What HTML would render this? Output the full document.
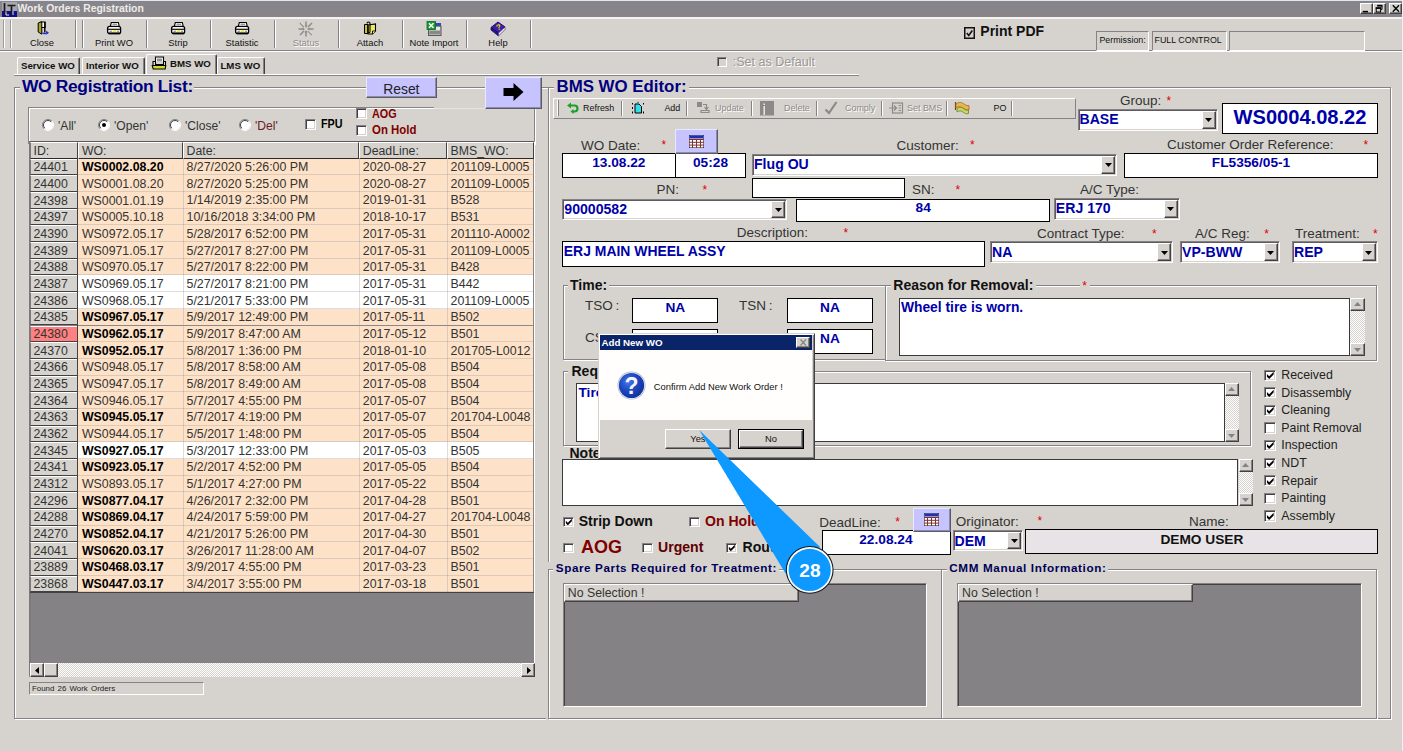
<!DOCTYPE html>
<html lang="en"><head><meta charset="utf-8"><title>Work Orders Registration</title>
<style>
html,body{margin:0;padding:0}
body{width:1403px;height:751px;position:relative;overflow:hidden;background:#d6d3ce;font-family:"Liberation Sans",Arial,sans-serif;}
body div{position:absolute;box-sizing:border-box}
.t{white-space:nowrap}
.gf{border:1px solid #848284;box-shadow:1px 1px 0 #fff, inset 1px 1px 0 #fff}
.sunk{border:1px solid;border-color:#848284 #fff #fff #848284;box-shadow:inset 1px 1px 0 #5e5c5e, inset -1px -1px 0 #d6d3ce}
.flat{border:1px solid #000}
.rais{border:1px solid;border-color:#fff #424142 #424142 #fff;box-shadow:inset -1px -1px 0 #848284}
.cb{border:1px solid;border-color:#848284 #fff #fff #848284;box-shadow:inset 1px 1px 0 #424142, inset -1px -1px 0 #d6d3ce}
.lav{background:#c6c3ff}
.hatch{background-image:repeating-conic-gradient(#fff 0 25%,#d6d3ce 0 50%);background-size:2px 2px}
</style></head><body>

<div class="" style="left:0.00px;top:0.00px;width:1403.00px;height:16.70px;background:#87858a;"></div>
<div class="" style="left:0.00px;top:0.00px;width:1403.00px;height:1.10px;background:#dfe7f2;"></div>
<svg style="position:absolute;left:2px;top:2px" width="15" height="15" viewBox="0 0 15 15"><rect x="0" y="0" width="15" height="10" fill="#a8a6a8"/><rect x="0" y="9" width="15" height="6" fill="#10108a"/><path d="M2.500 1v11h4M5.500 3.500h8M9.500 3.500v10" stroke="#181828" stroke-width="1.700" fill="none"/><path d="M4 9.500v3.500h3M11 9v4" stroke="#e8e8f0" stroke-width="1" fill="none"/></svg>
<div class="t " style="left:17.50px;top:4.20px;font-size:10.4px;line-height:10.4px;color:#eeecea;font-weight:bold;">Work Orders Registration</div>
<div class="rais" style="left:1359.80px;top:2.80px;width:12.80px;height:11.30px;background:#d6d3ce;"><svg width="11" height="10" viewBox="0 0 11 10" style="position:absolute;left:0;top:0"><path d="M1.700 7.600h5.300" stroke="#000" stroke-width="1.500"/></svg></div>
<div class="rais" style="left:1373.30px;top:2.80px;width:12.80px;height:11.30px;background:#d6d3ce;"><svg width="11" height="10" viewBox="0 0 11 10" style="position:absolute;left:0;top:0"><path d="M3.600 1.800h4.400v3.600h-1.200" stroke="#000" stroke-width="1" fill="none"/><path d="M3.100 1.600h5.400" stroke="#000" stroke-width="1.600"/><rect x="2.200" y="4.200" width="4.400" height="3.800" stroke="#000" stroke-width="1" fill="none"/><path d="M1.700 4h5.400" stroke="#000" stroke-width="1.600"/></svg></div>
<div class="rais" style="left:1388.80px;top:2.80px;width:12.80px;height:11.30px;background:#d6d3ce;"><svg width="11" height="10" viewBox="0 0 11 10" style="position:absolute;left:0;top:0"><path d="M2.800 1.200l6.200 6.600M9 1.200l-6.200 6.600" stroke="#000" stroke-width="1.300"/></svg></div>
<div class="" style="left:0.00px;top:16.70px;width:1403.00px;height:2.00px;background:#f4f3f1;"></div>
<div class="" style="left:0.00px;top:50.00px;width:1403.00px;height:1.00px;background:#848284;"></div>
<div class="" style="left:0.00px;top:51.00px;width:1403.00px;height:1.00px;background:#fff;"></div>
<div class="" style="left:3.00px;top:20.00px;width:1.00px;height:28.00px;background:#9c9a98;"></div>
<div class="" style="left:4.00px;top:20.00px;width:1.00px;height:28.00px;background:#fff;"></div>
<div class="" style="left:10.00px;top:20.00px;width:1.00px;height:28.00px;background:#9c9a98;"></div>
<div class="" style="left:11.00px;top:20.00px;width:1.00px;height:28.00px;background:#fff;"></div>
<div class="" style="left:75.00px;top:20.00px;width:1.00px;height:28.00px;background:#848284;"></div>
<div class="" style="left:76.00px;top:20.00px;width:1.00px;height:28.00px;background:#fff;"></div>
<div class="" style="left:81.80px;top:20.00px;width:1.00px;height:28.00px;background:#848284;"></div>
<div class="" style="left:82.80px;top:20.00px;width:1.00px;height:28.00px;background:#fff;"></div>
<div class="" style="left:146.30px;top:20.00px;width:1.00px;height:28.00px;background:#848284;"></div>
<div class="" style="left:147.30px;top:20.00px;width:1.00px;height:28.00px;background:#fff;"></div>
<div class="" style="left:210.30px;top:20.00px;width:1.00px;height:28.00px;background:#848284;"></div>
<div class="" style="left:211.30px;top:20.00px;width:1.00px;height:28.00px;background:#fff;"></div>
<div class="" style="left:274.30px;top:20.00px;width:1.00px;height:28.00px;background:#848284;"></div>
<div class="" style="left:275.30px;top:20.00px;width:1.00px;height:28.00px;background:#fff;"></div>
<div class="" style="left:338.00px;top:20.00px;width:1.00px;height:28.00px;background:#848284;"></div>
<div class="" style="left:339.00px;top:20.00px;width:1.00px;height:28.00px;background:#fff;"></div>
<div class="" style="left:402.00px;top:20.00px;width:1.00px;height:28.00px;background:#848284;"></div>
<div class="" style="left:403.00px;top:20.00px;width:1.00px;height:28.00px;background:#fff;"></div>
<div class="" style="left:466.20px;top:20.00px;width:1.00px;height:28.00px;background:#848284;"></div>
<div class="" style="left:467.20px;top:20.00px;width:1.00px;height:28.00px;background:#fff;"></div>
<div class="" style="left:530.20px;top:20.00px;width:1.00px;height:28.00px;background:#848284;"></div>
<div class="" style="left:531.20px;top:20.00px;width:1.00px;height:28.00px;background:#fff;"></div>
<div class="t " style="left:2.00px;top:37.64px;font-size:9.4px;line-height:9.4px;color:#111;width:80.00px;text-align:center;">Close</div>
<svg style="position:absolute;left:34px;top:21px" width="16" height="16" viewBox="0 0 16 16"><rect x="7" y="1" width="4.200" height="5.500" fill="#fff" stroke="#000" stroke-width="1"/><path d="M4.200 2l3.600-1.300v12.500l-3.600-2.200z" fill="#a8a418" stroke="#000" stroke-width="1"/><path d="M10.800 1v10.500" stroke="#000" stroke-width="1.400"/><path d="M8.500 11.800c2 1.200 3.500 1 5.500 0" stroke="#2838c8" stroke-width="1.500" fill="none"/><path d="M12 9.800l3 1.800-2.800 2z" fill="#2838c8"/></svg>
<div class="t " style="left:74.00px;top:37.64px;font-size:9.4px;line-height:9.4px;color:#111;width:80.00px;text-align:center;">Print WO</div>
<svg style="position:absolute;left:106px;top:21px" width="16" height="16" viewBox="0 0 16 16"><path d="M4.300 5.500l1-4h7l1 4z" fill="#fff" stroke="#000" stroke-width="1.100"/><path d="M6.500 3.200h4.500" stroke="#444" stroke-width=".8"/><rect x="1.600" y="5.300" width="13" height="7.400" rx="2" fill="#f4f4f4" stroke="#000" stroke-width="1.300"/><path d="M2 8.300h12.200" stroke="#000" stroke-width="1.100"/><path d="M2.500 12.300h11.200" stroke="#000" stroke-width="1.800"/><rect x="6.800" y="9.300" width="3.400" height="1.500" fill="#e8e818"/><path d="M3.500 10.300h2.500M11 10.300h2" stroke="#888" stroke-width="1"/></svg>
<div class="t " style="left:138.00px;top:37.64px;font-size:9.4px;line-height:9.4px;color:#111;width:80.00px;text-align:center;">Strip</div>
<svg style="position:absolute;left:170px;top:21px" width="16" height="16" viewBox="0 0 16 16"><path d="M4.300 5.500l1-4h7l1 4z" fill="#fff" stroke="#000" stroke-width="1.100"/><path d="M6.500 3.200h4.500" stroke="#444" stroke-width=".8"/><rect x="1.600" y="5.300" width="13" height="7.400" rx="2" fill="#f4f4f4" stroke="#000" stroke-width="1.300"/><path d="M2 8.300h12.200" stroke="#000" stroke-width="1.100"/><path d="M2.500 12.300h11.200" stroke="#000" stroke-width="1.800"/><rect x="6.800" y="9.300" width="3.400" height="1.500" fill="#e8e818"/><path d="M3.500 10.300h2.500M11 10.300h2" stroke="#888" stroke-width="1"/></svg>
<div class="t " style="left:202.00px;top:37.64px;font-size:9.4px;line-height:9.4px;color:#111;width:80.00px;text-align:center;">Statistic</div>
<svg style="position:absolute;left:234px;top:21px" width="16" height="16" viewBox="0 0 16 16"><path d="M4.300 5.500l1-4h7l1 4z" fill="#fff" stroke="#000" stroke-width="1.100"/><path d="M6.500 3.200h4.500" stroke="#444" stroke-width=".8"/><rect x="1.600" y="5.300" width="13" height="7.400" rx="2" fill="#f4f4f4" stroke="#000" stroke-width="1.300"/><path d="M2 8.300h12.200" stroke="#000" stroke-width="1.100"/><path d="M2.500 12.300h11.200" stroke="#000" stroke-width="1.800"/><rect x="6.800" y="9.300" width="3.400" height="1.500" fill="#e8e818"/><path d="M3.500 10.300h2.500M11 10.300h2" stroke="#888" stroke-width="1"/></svg>
<div class="t " style="left:266.00px;top:37.64px;font-size:9.4px;line-height:9.4px;color:#8e8c8a;width:80.00px;text-align:center;text-shadow:1px 1px 0 #fff;">Status</div>
<svg style="position:absolute;left:298px;top:21px" width="16" height="16" viewBox="0 0 16 16"><g stroke="#8e8c8a" stroke-width="1.500" fill="none"><path d="M8 .5v5M8 15.500v-5M.5 8h5M15.500 8h-5M2 2l4 4M14 2l-4 4M2 14l4-4M14 14l-4-4"/></g><g fill="#8e8c8a"><path d="M6.500 4.500h3L8 7zM6.500 11.500h3L8 9zM4.500 6.500v3L7 8zM11.500 6.500v3L9 8z"/></g><g stroke="#fff" stroke-width=".7" opacity=".8"><path d="M3 1.800l4 4M9.800 9l4.500 4.500"/></g></svg>
<div class="t " style="left:330.00px;top:37.64px;font-size:9.4px;line-height:9.4px;color:#111;width:80.00px;text-align:center;">Attach</div>
<svg style="position:absolute;left:362px;top:21px" width="16" height="16" viewBox="0 0 16 16"><path d="M2.500 3.500h3.500v9h-3.500z" fill="#c8c040" stroke="#000" stroke-width="1"/><path d="M6 4l7.500-1v7l-3 3h-4.500z" fill="#f0ec60" stroke="#000" stroke-width="1.100"/><path d="M10.500 13v-3h3" fill="#fff8b0" stroke="#000" stroke-width=".9"/><path d="M5 2.500c0-2 3-2 3 0v8c0 1.500-2 1.500-2 0v-6" fill="none" stroke="#000" stroke-width="1.100"/></svg>
<div class="t " style="left:394.00px;top:37.64px;font-size:9.4px;line-height:9.4px;color:#111;width:80.00px;text-align:center;">Note Import</div>
<svg style="position:absolute;left:426px;top:21px" width="16" height="16" viewBox="0 0 16 16"><rect x="9" y="2" width="6" height="3" fill="#2848c8"/><rect x="2.500" y="5" width="12.500" height="9.500" fill="#b4b4b4" stroke="#585858" stroke-width="1"/><rect x="3.500" y="10" width="10.500" height="3" fill="#888"/><rect x="10" y="6" width="4" height="3" fill="#e8e8e8"/><rect x="1" y=".5" width="8.500" height="8" fill="#1f9a38" stroke="#0a6a20" stroke-width=".8"/><path d="M3 2.300l4.500 4.500M7.500 2.300l-4.500 4.500" stroke="#fff" stroke-width="1.500"/></svg>
<div class="t " style="left:458.00px;top:37.64px;font-size:9.4px;line-height:9.4px;color:#111;width:80.00px;text-align:center;">Help</div>
<svg style="position:absolute;left:490px;top:21px" width="16" height="16" viewBox="0 0 16 16"><path d="M1 6.500l7-5.500 7 5-6.500 6z" fill="#3a1fa8" stroke="#1c0a60" stroke-width="1"/><path d="M1 6.500v2.500l7.500 6v-3z" fill="#2a1488" stroke="#1c0a60" stroke-width=".8"/><path d="M8.500 12l6.500-6v2.500l-6.500 6.500z" fill="#f0f0f8" stroke="#504088" stroke-width=".8"/><text x="6" y="9" font-size="8" font-weight="bold" fill="#f4d818" font-family="Liberation Sans, sans-serif" transform="rotate(-20 8 6)">?</text></svg>
<svg style="position:absolute;left:964px;top:26.500px" width="11" height="12" viewBox="0 0 11 12"><rect x=".75" y=".75" width="9.500" height="10.500" fill="none" stroke="#111" stroke-width="1.500"/><path d="M2.800 6l2 2.500 3.500-5" fill="none" stroke="#111" stroke-width="1.600"/></svg>
<div class="t " style="left:980.30px;top:24.45px;font-size:14px;line-height:14px;color:#111;font-weight:bold;">Print PDF</div>
<div class="" style="left:1096.00px;top:31.00px;width:53.00px;height:19.50px;border:1px solid;border-color:#848284 #fff #fff #848284;"></div>
<div class="" style="left:1152.00px;top:31.00px;width:74.50px;height:19.50px;border:1px solid;border-color:#848284 #fff #fff #848284;"></div>
<div class="" style="left:1229.40px;top:31.00px;width:135.50px;height:19.50px;border:1px solid;border-color:#848284 #fff #fff #848284;"></div>
<div class="t " style="left:1099.40px;top:35.97px;font-size:8.9px;line-height:8.9px;color:#111;">Permission:</div>
<div class="t " style="left:1154.50px;top:35.97px;font-size:8.9px;line-height:8.9px;color:#111;">FULL CONTROL</div>
<div class="" style="left:14.00px;top:74.00px;width:845.00px;height:1.00px;background:#fff;"></div>
<div class="" style="left:14.00px;top:75.00px;width:845.00px;height:1.00px;background:#848284;"></div>
<div class="" style="left:16.60px;top:57.00px;width:63.40px;height:17.00px;background:#d6d3ce;border:1px solid;border-color:#fff #424142 #d6d3ce #fff;border-bottom:none;border-radius:2px 2px 0 0;box-shadow:inset -1px 0 0 #848284;"></div>
<div class="" style="left:81.60px;top:57.00px;width:63.00px;height:17.00px;background:#d6d3ce;border:1px solid;border-color:#fff #424142 #d6d3ce #fff;border-bottom:none;border-radius:2px 2px 0 0;box-shadow:inset -1px 0 0 #848284;"></div>
<div class="" style="left:217.00px;top:57.00px;width:48.00px;height:17.00px;background:#d6d3ce;border:1px solid;border-color:#fff #424142 #d6d3ce #fff;border-bottom:none;border-radius:2px 2px 0 0;box-shadow:inset -1px 0 0 #848284;"></div>
<div class="" style="left:145.60px;top:54.00px;width:71.40px;height:20.00px;background:#d6d3ce;border:1px solid;border-color:#fff #424142 #d6d3ce #fff;border-bottom:none;border-radius:2px 2px 0 0;box-shadow:inset -1px 0 0 #848284;"></div>
<div class="t " style="left:21.00px;top:60.79px;font-size:9.7px;line-height:9.7px;color:#111;font-weight:bold;">Service WO</div>
<div class="t " style="left:86.00px;top:60.79px;font-size:9.7px;line-height:9.7px;color:#111;font-weight:bold;">Interior WO</div>
<div class="t " style="left:170.00px;top:58.79px;font-size:9.7px;line-height:9.7px;color:#111;font-weight:bold;">BMS WO</div>
<div class="t " style="left:220.40px;top:60.79px;font-size:9.7px;line-height:9.7px;color:#111;font-weight:bold;">LMS WO</div>
<svg style="position:absolute;left:150.500px;top:56px" width="16" height="14" viewBox="0 0 16 14"><path d="M4.500 6v-5h8v5" fill="#fff" stroke="#000" stroke-width="1.100"/><rect x="6" y="2.500" width="5" height="3" fill="#909498"/><path d="M2 5.500h2.500v3h8v-3h2v4h-12.500z" fill="#e8e8e8" stroke="#000" stroke-width="1.100"/><path d="M1.200 9.500h13.500l-.5 3.500h-12z" fill="#d8d820" stroke="#000" stroke-width="1.100"/></svg>
<div class="" style="left:716.50px;top:57.00px;width:10.00px;height:10.00px;background:#d6d3ce;border:1px solid;border-color:#848284 #fff #fff #848284;box-shadow:inset 1px 1px 0 #424142;"></div>
<div class="t " style="left:732.70px;top:55.88px;font-size:12.55px;line-height:12.55px;color:#9a9896;text-shadow:1px 1px 0 #fff;">:Set as Default</div>
<div class="gf" style="left:14.00px;top:87.00px;width:535.00px;height:632.00px;"></div>
<div class="" style="left:20.00px;top:78.00px;width:174.00px;height:18.00px;background:#d6d3ce;"></div>
<div class="t " style="left:22.00px;top:78.27px;font-size:17.4px;line-height:17.4px;color:#000080;font-weight:bold;letter-spacing:-0.33px;">WO Registration List:</div>
<div class="gf" style="left:28.00px;top:107.00px;width:507.00px;height:37.00px;"></div>
<div class="" style="left:354.00px;top:100.00px;width:80.00px;height:44.00px;background:#d6d3ce;"></div>
<div class="" style="left:354.00px;top:107.00px;width:80.00px;height:1.00px;background:#848284;"></div>
<div class="" style="left:354.00px;top:108.00px;width:80.00px;height:1.00px;background:#fff;"></div>
<div class="" style="left:434.00px;top:106.00px;width:52.00px;height:4.00px;background:#d6d3ce;"></div>
<div class="" style="left:434.00px;top:108.00px;width:52.00px;height:1.00px;background:#e6e4e0;"></div>
<div class="" style="left:365.60px;top:77.00px;width:71.50px;height:20.60px;background:#c6c3ff;border:1px solid;border-color:#e8e8ff #5a5a6a #5a5a6a #e8e8ff;box-shadow:inset -1px -1px 0 #8c8ca8;"></div>
<div class="t " style="left:365.60px;top:82.63px;font-size:13.9px;line-height:13.9px;color:#222;width:71.50px;text-align:center;">Reset</div>
<div class="" style="left:485.00px;top:77.00px;width:57.40px;height:31.50px;background:#c6c3ff;border:1px solid;border-color:#e8e8ff #5a5a6a #5a5a6a #e8e8ff;box-shadow:inset -1px -1px 0 #8c8ca8;"></div>
<svg style="position:absolute;left:502px;top:82px" width="24" height="20" viewBox="0 0 24 20"><path d="M1.500 6h10V1l10 9-10 9v-5h-10z" fill="#000"/></svg>
<svg style="position:absolute;left:42px;top:119px" width="12" height="12" viewBox="0 0 12 12"><circle cx="6" cy="6" r="5" fill="#fff"/><path d="M2.100 9.900A5.500 5.500 0 0 1 9.900 2.100" fill="none" stroke="#848284" stroke-width="1"/><path d="M2.800 9.200A4.500 4.500 0 0 1 9.200 2.800" fill="none" stroke="#424142" stroke-width="1"/><path d="M9.900 2.100A5.500 5.500 0 0 1 2.100 9.900" fill="none" stroke="#fff" stroke-width="1"/></svg>
<svg style="position:absolute;left:98px;top:119px" width="12" height="12" viewBox="0 0 12 12"><circle cx="6" cy="6" r="5" fill="#fff"/><path d="M2.100 9.900A5.500 5.500 0 0 1 9.900 2.100" fill="none" stroke="#848284" stroke-width="1"/><path d="M2.800 9.200A4.500 4.500 0 0 1 9.200 2.800" fill="none" stroke="#424142" stroke-width="1"/><path d="M9.900 2.100A5.500 5.500 0 0 1 2.100 9.900" fill="none" stroke="#fff" stroke-width="1"/><circle cx="6" cy="6" r="2" fill="#000"/></svg>
<svg style="position:absolute;left:169px;top:119px" width="12" height="12" viewBox="0 0 12 12"><circle cx="6" cy="6" r="5" fill="#fff"/><path d="M2.100 9.900A5.500 5.500 0 0 1 9.900 2.100" fill="none" stroke="#848284" stroke-width="1"/><path d="M2.800 9.200A4.500 4.500 0 0 1 9.200 2.800" fill="none" stroke="#424142" stroke-width="1"/><path d="M9.900 2.100A5.500 5.500 0 0 1 2.100 9.900" fill="none" stroke="#fff" stroke-width="1"/></svg>
<svg style="position:absolute;left:239px;top:119px" width="12" height="12" viewBox="0 0 12 12"><circle cx="6" cy="6" r="5" fill="#fff"/><path d="M2.100 9.900A5.500 5.500 0 0 1 9.900 2.100" fill="none" stroke="#848284" stroke-width="1"/><path d="M2.800 9.200A4.500 4.500 0 0 1 9.200 2.800" fill="none" stroke="#424142" stroke-width="1"/><path d="M9.900 2.100A5.500 5.500 0 0 1 2.100 9.900" fill="none" stroke="#fff" stroke-width="1"/></svg>
<div class="t " style="left:58.00px;top:119.76px;font-size:12.1px;line-height:12.1px;color:#333;">'All'</div>
<div class="t " style="left:114.00px;top:119.76px;font-size:12.1px;line-height:12.1px;color:#333;">'Open'</div>
<div class="t " style="left:185.00px;top:119.76px;font-size:12.1px;line-height:12.1px;color:#333;">'Close'</div>
<div class="t " style="left:255.00px;top:119.76px;font-size:12.1px;line-height:12.1px;color:#6a2020;">'Del'</div>
<div class="cb" style="left:305.00px;top:119.00px;width:10.5px;height:10.5px;background:#fff;"></div>
<div class="t " style="left:321.00px;top:118.42px;font-size:12.5px;line-height:12.5px;color:#000;font-weight:bold;transform:scaleX(.86);transform-origin:0 0;">FPU</div>
<div class="cb" style="left:356.40px;top:108.00px;width:10.5px;height:10.5px;background:#fff;"></div>
<div class="t " style="left:372.00px;top:107.59px;font-size:12.3px;line-height:12.3px;color:#800000;font-weight:bold;transform:scaleX(.88);transform-origin:0 0;">AOG</div>
<div class="cb" style="left:356.40px;top:125.00px;width:10.5px;height:10.5px;background:#fff;"></div>
<div class="t " style="left:372.00px;top:124.09px;font-size:12.3px;line-height:12.3px;color:#800000;font-weight:bold;transform:scaleX(.93);transform-origin:0 0;">On Hold</div>
<div class="" style="left:29.30px;top:141.30px;width:506.20px;height:536.20px;background:#848284;border:1px solid #5a585a;border-left:2px solid #7b797b;border-right-color:#fff;border-bottom-color:#fff"></div>
<div class="" style="left:30.00px;top:142.30px;width:48.40px;height:16.40px;background:#d6d3ce;border:1px solid;border-color:#fff #424142 #2a2a2a #7b797b;"></div>
<div class="t " style="left:33.50px;top:144.79px;font-size:12.3px;line-height:12.3px;color:#333;">ID:</div>
<div class="" style="left:78.40px;top:142.30px;width:104.60px;height:16.40px;background:#d6d3ce;border:1px solid;border-color:#fff #424142 #2a2a2a #fff;"></div>
<div class="t " style="left:81.90px;top:144.79px;font-size:12.3px;line-height:12.3px;color:#333;">WO:</div>
<div class="" style="left:183.00px;top:142.30px;width:176.30px;height:16.40px;background:#d6d3ce;border:1px solid;border-color:#fff #424142 #2a2a2a #fff;"></div>
<div class="t " style="left:186.50px;top:144.79px;font-size:12.3px;line-height:12.3px;color:#333;">Date:</div>
<div class="" style="left:359.30px;top:142.30px;width:87.70px;height:16.40px;background:#d6d3ce;border:1px solid;border-color:#fff #424142 #2a2a2a #fff;"></div>
<div class="t " style="left:362.80px;top:144.79px;font-size:12.3px;line-height:12.3px;color:#333;">DeadLine:</div>
<div class="" style="left:447.00px;top:142.30px;width:86.50px;height:16.40px;background:#d6d3ce;border:1px solid;border-color:#fff #424142 #2a2a2a #fff;"></div>
<div class="t " style="left:450.50px;top:144.79px;font-size:12.3px;line-height:12.3px;color:#333;">BMS_WO:</div>
<div class="" style="left:78.40px;top:158.70px;width:455.10px;height:16.68px;background:#fde2c8;"></div>
<div class="" style="left:30.00px;top:158.70px;width:48.40px;height:16.68px;background:#d6d3ce;border:1px solid;border-color:#fff #2a2a2a #424142 #7b797b;"></div>
<div class="" style="left:78.40px;top:174.38px;width:455.10px;height:1.00px;background:rgba(150,150,160,.32);"></div>
<div class="t " style="left:33.50px;top:161.15px;font-size:12.35px;line-height:12.35px;color:#333;">24401</div>
<div class="t " style="left:81.90px;top:161.15px;font-size:12.35px;line-height:12.35px;color:#000;font-weight:bold;">WS0002.08.20</div>
<div class="t " style="left:186.50px;top:161.10px;font-size:12.4px;line-height:12.4px;color:#333;">8/27/2020 5:26:00 PM</div>
<div class="t " style="left:362.80px;top:161.10px;font-size:12.4px;line-height:12.4px;color:#333;">2020-08-27</div>
<div class="t " style="left:450.50px;top:161.10px;font-size:12.4px;line-height:12.4px;color:#333;">201109-L0005</div>
<div class="" style="left:78.40px;top:175.38px;width:455.10px;height:16.68px;background:#fde2c8;"></div>
<div class="" style="left:30.00px;top:175.38px;width:48.40px;height:16.68px;background:#d6d3ce;border:1px solid;border-color:#fff #2a2a2a #424142 #7b797b;"></div>
<div class="" style="left:78.40px;top:191.06px;width:455.10px;height:1.00px;background:rgba(150,150,160,.32);"></div>
<div class="t " style="left:33.50px;top:177.83px;font-size:12.35px;line-height:12.35px;color:#333;">24400</div>
<div class="t " style="left:81.90px;top:177.83px;font-size:12.35px;line-height:12.35px;color:#333;">WS0001.08.20</div>
<div class="t " style="left:186.50px;top:177.78px;font-size:12.4px;line-height:12.4px;color:#333;">8/27/2020 5:25:00 PM</div>
<div class="t " style="left:362.80px;top:177.78px;font-size:12.4px;line-height:12.4px;color:#333;">2020-08-27</div>
<div class="t " style="left:450.50px;top:177.78px;font-size:12.4px;line-height:12.4px;color:#333;">201109-L0005</div>
<div class="" style="left:78.40px;top:192.06px;width:455.10px;height:16.68px;background:#fde2c8;"></div>
<div class="" style="left:30.00px;top:192.06px;width:48.40px;height:16.68px;background:#d6d3ce;border:1px solid;border-color:#fff #2a2a2a #424142 #7b797b;"></div>
<div class="" style="left:78.40px;top:207.74px;width:455.10px;height:1.00px;background:rgba(150,150,160,.32);"></div>
<div class="t " style="left:33.50px;top:194.51px;font-size:12.35px;line-height:12.35px;color:#333;">24398</div>
<div class="t " style="left:81.90px;top:194.51px;font-size:12.35px;line-height:12.35px;color:#333;">WS0001.01.19</div>
<div class="t " style="left:186.50px;top:194.46px;font-size:12.4px;line-height:12.4px;color:#333;">1/14/2019 2:35:00 PM</div>
<div class="t " style="left:362.80px;top:194.46px;font-size:12.4px;line-height:12.4px;color:#333;">2019-01-31</div>
<div class="t " style="left:450.50px;top:194.46px;font-size:12.4px;line-height:12.4px;color:#333;">B528</div>
<div class="" style="left:78.40px;top:208.74px;width:455.10px;height:16.68px;background:#fde2c8;"></div>
<div class="" style="left:30.00px;top:208.74px;width:48.40px;height:16.68px;background:#d6d3ce;border:1px solid;border-color:#fff #2a2a2a #424142 #7b797b;"></div>
<div class="" style="left:78.40px;top:224.42px;width:455.10px;height:1.00px;background:rgba(150,150,160,.32);"></div>
<div class="t " style="left:33.50px;top:211.19px;font-size:12.35px;line-height:12.35px;color:#333;">24397</div>
<div class="t " style="left:81.90px;top:211.19px;font-size:12.35px;line-height:12.35px;color:#333;">WS0005.10.18</div>
<div class="t " style="left:186.50px;top:211.14px;font-size:12.4px;line-height:12.4px;color:#333;">10/16/2018 3:34:00 PM</div>
<div class="t " style="left:362.80px;top:211.14px;font-size:12.4px;line-height:12.4px;color:#333;">2018-10-17</div>
<div class="t " style="left:450.50px;top:211.14px;font-size:12.4px;line-height:12.4px;color:#333;">B531</div>
<div class="" style="left:78.40px;top:225.42px;width:455.10px;height:16.68px;background:#fde2c8;"></div>
<div class="" style="left:30.00px;top:225.42px;width:48.40px;height:16.68px;background:#d6d3ce;border:1px solid;border-color:#fff #2a2a2a #424142 #7b797b;"></div>
<div class="" style="left:78.40px;top:241.10px;width:455.10px;height:1.00px;background:rgba(150,150,160,.32);"></div>
<div class="t " style="left:33.50px;top:227.87px;font-size:12.35px;line-height:12.35px;color:#333;">24390</div>
<div class="t " style="left:81.90px;top:227.87px;font-size:12.35px;line-height:12.35px;color:#333;">WS0972.05.17</div>
<div class="t " style="left:186.50px;top:227.82px;font-size:12.4px;line-height:12.4px;color:#333;">5/28/2017 6:52:00 PM</div>
<div class="t " style="left:362.80px;top:227.82px;font-size:12.4px;line-height:12.4px;color:#333;">2017-05-31</div>
<div class="t " style="left:450.50px;top:227.82px;font-size:12.4px;line-height:12.4px;color:#333;">201110-A0002</div>
<div class="" style="left:78.40px;top:242.10px;width:455.10px;height:16.68px;background:#fde2c8;"></div>
<div class="" style="left:30.00px;top:242.10px;width:48.40px;height:16.68px;background:#d6d3ce;border:1px solid;border-color:#fff #2a2a2a #424142 #7b797b;"></div>
<div class="" style="left:78.40px;top:257.78px;width:455.10px;height:1.00px;background:rgba(150,150,160,.32);"></div>
<div class="t " style="left:33.50px;top:244.55px;font-size:12.35px;line-height:12.35px;color:#333;">24389</div>
<div class="t " style="left:81.90px;top:244.55px;font-size:12.35px;line-height:12.35px;color:#333;">WS0971.05.17</div>
<div class="t " style="left:186.50px;top:244.50px;font-size:12.4px;line-height:12.4px;color:#333;">5/27/2017 8:27:00 PM</div>
<div class="t " style="left:362.80px;top:244.50px;font-size:12.4px;line-height:12.4px;color:#333;">2017-05-31</div>
<div class="t " style="left:450.50px;top:244.50px;font-size:12.4px;line-height:12.4px;color:#333;">201109-L0005</div>
<div class="" style="left:78.40px;top:258.78px;width:455.10px;height:16.68px;background:#fde2c8;"></div>
<div class="" style="left:30.00px;top:258.78px;width:48.40px;height:16.68px;background:#d6d3ce;border:1px solid;border-color:#fff #2a2a2a #424142 #7b797b;"></div>
<div class="" style="left:78.40px;top:274.46px;width:455.10px;height:1.00px;background:rgba(150,150,160,.32);"></div>
<div class="t " style="left:33.50px;top:261.23px;font-size:12.35px;line-height:12.35px;color:#333;">24388</div>
<div class="t " style="left:81.90px;top:261.23px;font-size:12.35px;line-height:12.35px;color:#333;">WS0970.05.17</div>
<div class="t " style="left:186.50px;top:261.18px;font-size:12.4px;line-height:12.4px;color:#333;">5/27/2017 8:22:00 PM</div>
<div class="t " style="left:362.80px;top:261.18px;font-size:12.4px;line-height:12.4px;color:#333;">2017-05-31</div>
<div class="t " style="left:450.50px;top:261.18px;font-size:12.4px;line-height:12.4px;color:#333;">B428</div>
<div class="" style="left:78.40px;top:275.46px;width:455.10px;height:16.68px;background:#ffffff;"></div>
<div class="" style="left:30.00px;top:275.46px;width:48.40px;height:16.68px;background:#d6d3ce;border:1px solid;border-color:#fff #2a2a2a #424142 #7b797b;"></div>
<div class="" style="left:78.40px;top:291.14px;width:455.10px;height:1.00px;background:rgba(150,150,160,.32);"></div>
<div class="t " style="left:33.50px;top:277.91px;font-size:12.35px;line-height:12.35px;color:#333;">24387</div>
<div class="t " style="left:81.90px;top:277.91px;font-size:12.35px;line-height:12.35px;color:#333;">WS0969.05.17</div>
<div class="t " style="left:186.50px;top:277.86px;font-size:12.4px;line-height:12.4px;color:#333;">5/27/2017 8:21:00 PM</div>
<div class="t " style="left:362.80px;top:277.86px;font-size:12.4px;line-height:12.4px;color:#333;">2017-05-31</div>
<div class="t " style="left:450.50px;top:277.86px;font-size:12.4px;line-height:12.4px;color:#333;">B442</div>
<div class="" style="left:78.40px;top:292.14px;width:455.10px;height:16.68px;background:#ffffff;"></div>
<div class="" style="left:30.00px;top:292.14px;width:48.40px;height:16.68px;background:#d6d3ce;border:1px solid;border-color:#fff #2a2a2a #424142 #7b797b;"></div>
<div class="" style="left:78.40px;top:307.82px;width:455.10px;height:1.00px;background:rgba(150,150,160,.32);"></div>
<div class="t " style="left:33.50px;top:294.59px;font-size:12.35px;line-height:12.35px;color:#333;">24386</div>
<div class="t " style="left:81.90px;top:294.59px;font-size:12.35px;line-height:12.35px;color:#333;">WS0968.05.17</div>
<div class="t " style="left:186.50px;top:294.54px;font-size:12.4px;line-height:12.4px;color:#333;">5/21/2017 5:33:00 PM</div>
<div class="t " style="left:362.80px;top:294.54px;font-size:12.4px;line-height:12.4px;color:#333;">2017-05-31</div>
<div class="t " style="left:450.50px;top:294.54px;font-size:12.4px;line-height:12.4px;color:#333;">201109-L0005</div>
<div class="" style="left:78.40px;top:308.82px;width:455.10px;height:16.68px;background:#fde2c8;"></div>
<div class="" style="left:30.00px;top:308.82px;width:48.40px;height:16.68px;background:#d6d3ce;border:1px solid;border-color:#fff #2a2a2a #424142 #7b797b;"></div>
<div class="" style="left:78.40px;top:324.50px;width:455.10px;height:1.00px;background:rgba(150,150,160,.32);"></div>
<div class="t " style="left:33.50px;top:311.27px;font-size:12.35px;line-height:12.35px;color:#333;">24385</div>
<div class="t " style="left:81.90px;top:311.27px;font-size:12.35px;line-height:12.35px;color:#000;font-weight:bold;">WS0967.05.17</div>
<div class="t " style="left:186.50px;top:311.22px;font-size:12.4px;line-height:12.4px;color:#333;">5/9/2017 12:49:00 PM</div>
<div class="t " style="left:362.80px;top:311.22px;font-size:12.4px;line-height:12.4px;color:#333;">2017-05-11</div>
<div class="t " style="left:450.50px;top:311.22px;font-size:12.4px;line-height:12.4px;color:#333;">B502</div>
<div class="" style="left:78.40px;top:325.50px;width:455.10px;height:16.68px;background:#fde2c8;"></div>
<div class="" style="left:30.00px;top:325.50px;width:48.40px;height:16.68px;background:#ff8080;border:1px solid;border-color:#fff #2a2a2a #424142 #7b797b;"></div>
<div class="" style="left:78.40px;top:341.18px;width:455.10px;height:1.00px;background:rgba(150,150,160,.32);"></div>
<div class="t " style="left:33.50px;top:327.95px;font-size:12.35px;line-height:12.35px;color:#333;">24380</div>
<div class="t " style="left:81.90px;top:327.95px;font-size:12.35px;line-height:12.35px;color:#000;font-weight:bold;">WS0962.05.17</div>
<div class="t " style="left:186.50px;top:327.90px;font-size:12.4px;line-height:12.4px;color:#333;">5/9/2017 8:47:00 AM</div>
<div class="t " style="left:362.80px;top:327.90px;font-size:12.4px;line-height:12.4px;color:#333;">2017-05-12</div>
<div class="t " style="left:450.50px;top:327.90px;font-size:12.4px;line-height:12.4px;color:#333;">B501</div>
<div class="" style="left:78.40px;top:342.18px;width:455.10px;height:16.68px;background:#fde2c8;"></div>
<div class="" style="left:30.00px;top:342.18px;width:48.40px;height:16.68px;background:#d6d3ce;border:1px solid;border-color:#fff #2a2a2a #424142 #7b797b;"></div>
<div class="" style="left:78.40px;top:357.86px;width:455.10px;height:1.00px;background:rgba(150,150,160,.32);"></div>
<div class="t " style="left:33.50px;top:344.63px;font-size:12.35px;line-height:12.35px;color:#333;">24370</div>
<div class="t " style="left:81.90px;top:344.63px;font-size:12.35px;line-height:12.35px;color:#000;font-weight:bold;">WS0952.05.17</div>
<div class="t " style="left:186.50px;top:344.58px;font-size:12.4px;line-height:12.4px;color:#333;">5/8/2017 1:36:00 PM</div>
<div class="t " style="left:362.80px;top:344.58px;font-size:12.4px;line-height:12.4px;color:#333;">2018-01-10</div>
<div class="t " style="left:450.50px;top:344.58px;font-size:12.4px;line-height:12.4px;color:#333;">201705-L0012</div>
<div class="" style="left:78.40px;top:358.86px;width:455.10px;height:16.68px;background:#fde2c8;"></div>
<div class="" style="left:30.00px;top:358.86px;width:48.40px;height:16.68px;background:#d6d3ce;border:1px solid;border-color:#fff #2a2a2a #424142 #7b797b;"></div>
<div class="" style="left:78.40px;top:374.54px;width:455.10px;height:1.00px;background:rgba(150,150,160,.32);"></div>
<div class="t " style="left:33.50px;top:361.31px;font-size:12.35px;line-height:12.35px;color:#333;">24366</div>
<div class="t " style="left:81.90px;top:361.31px;font-size:12.35px;line-height:12.35px;color:#333;">WS0948.05.17</div>
<div class="t " style="left:186.50px;top:361.26px;font-size:12.4px;line-height:12.4px;color:#333;">5/8/2017 8:58:00 AM</div>
<div class="t " style="left:362.80px;top:361.26px;font-size:12.4px;line-height:12.4px;color:#333;">2017-05-08</div>
<div class="t " style="left:450.50px;top:361.26px;font-size:12.4px;line-height:12.4px;color:#333;">B504</div>
<div class="" style="left:78.40px;top:375.54px;width:455.10px;height:16.68px;background:#fde2c8;"></div>
<div class="" style="left:30.00px;top:375.54px;width:48.40px;height:16.68px;background:#d6d3ce;border:1px solid;border-color:#fff #2a2a2a #424142 #7b797b;"></div>
<div class="" style="left:78.40px;top:391.22px;width:455.10px;height:1.00px;background:rgba(150,150,160,.32);"></div>
<div class="t " style="left:33.50px;top:377.99px;font-size:12.35px;line-height:12.35px;color:#333;">24365</div>
<div class="t " style="left:81.90px;top:377.99px;font-size:12.35px;line-height:12.35px;color:#333;">WS0947.05.17</div>
<div class="t " style="left:186.50px;top:377.94px;font-size:12.4px;line-height:12.4px;color:#333;">5/8/2017 8:49:00 AM</div>
<div class="t " style="left:362.80px;top:377.94px;font-size:12.4px;line-height:12.4px;color:#333;">2017-05-08</div>
<div class="t " style="left:450.50px;top:377.94px;font-size:12.4px;line-height:12.4px;color:#333;">B504</div>
<div class="" style="left:78.40px;top:392.22px;width:455.10px;height:16.68px;background:#fde2c8;"></div>
<div class="" style="left:30.00px;top:392.22px;width:48.40px;height:16.68px;background:#d6d3ce;border:1px solid;border-color:#fff #2a2a2a #424142 #7b797b;"></div>
<div class="" style="left:78.40px;top:407.90px;width:455.10px;height:1.00px;background:rgba(150,150,160,.32);"></div>
<div class="t " style="left:33.50px;top:394.67px;font-size:12.35px;line-height:12.35px;color:#333;">24364</div>
<div class="t " style="left:81.90px;top:394.67px;font-size:12.35px;line-height:12.35px;color:#333;">WS0946.05.17</div>
<div class="t " style="left:186.50px;top:394.62px;font-size:12.4px;line-height:12.4px;color:#333;">5/7/2017 4:55:00 PM</div>
<div class="t " style="left:362.80px;top:394.62px;font-size:12.4px;line-height:12.4px;color:#333;">2017-05-07</div>
<div class="t " style="left:450.50px;top:394.62px;font-size:12.4px;line-height:12.4px;color:#333;">B504</div>
<div class="" style="left:78.40px;top:408.90px;width:455.10px;height:16.68px;background:#fde2c8;"></div>
<div class="" style="left:30.00px;top:408.90px;width:48.40px;height:16.68px;background:#d6d3ce;border:1px solid;border-color:#fff #2a2a2a #424142 #7b797b;"></div>
<div class="" style="left:78.40px;top:424.58px;width:455.10px;height:1.00px;background:rgba(150,150,160,.32);"></div>
<div class="t " style="left:33.50px;top:411.35px;font-size:12.35px;line-height:12.35px;color:#333;">24363</div>
<div class="t " style="left:81.90px;top:411.35px;font-size:12.35px;line-height:12.35px;color:#000;font-weight:bold;">WS0945.05.17</div>
<div class="t " style="left:186.50px;top:411.30px;font-size:12.4px;line-height:12.4px;color:#333;">5/7/2017 4:19:00 PM</div>
<div class="t " style="left:362.80px;top:411.30px;font-size:12.4px;line-height:12.4px;color:#333;">2017-05-07</div>
<div class="t " style="left:450.50px;top:411.30px;font-size:12.4px;line-height:12.4px;color:#333;">201704-L0048</div>
<div class="" style="left:78.40px;top:425.58px;width:455.10px;height:16.68px;background:#fde2c8;"></div>
<div class="" style="left:30.00px;top:425.58px;width:48.40px;height:16.68px;background:#d6d3ce;border:1px solid;border-color:#fff #2a2a2a #424142 #7b797b;"></div>
<div class="" style="left:78.40px;top:441.26px;width:455.10px;height:1.00px;background:rgba(150,150,160,.32);"></div>
<div class="t " style="left:33.50px;top:428.03px;font-size:12.35px;line-height:12.35px;color:#333;">24362</div>
<div class="t " style="left:81.90px;top:428.03px;font-size:12.35px;line-height:12.35px;color:#333;">WS0944.05.17</div>
<div class="t " style="left:186.50px;top:427.98px;font-size:12.4px;line-height:12.4px;color:#333;">5/5/2017 1:48:00 PM</div>
<div class="t " style="left:362.80px;top:427.98px;font-size:12.4px;line-height:12.4px;color:#333;">2017-05-05</div>
<div class="t " style="left:450.50px;top:427.98px;font-size:12.4px;line-height:12.4px;color:#333;">B504</div>
<div class="" style="left:78.40px;top:442.26px;width:455.10px;height:16.68px;background:#ffffff;"></div>
<div class="" style="left:30.00px;top:442.26px;width:48.40px;height:16.68px;background:#d6d3ce;border:1px solid;border-color:#fff #2a2a2a #424142 #7b797b;"></div>
<div class="" style="left:78.40px;top:457.94px;width:455.10px;height:1.00px;background:rgba(150,150,160,.32);"></div>
<div class="t " style="left:33.50px;top:444.71px;font-size:12.35px;line-height:12.35px;color:#333;">24345</div>
<div class="t " style="left:81.90px;top:444.71px;font-size:12.35px;line-height:12.35px;color:#000;font-weight:bold;">WS0927.05.17</div>
<div class="t " style="left:186.50px;top:444.66px;font-size:12.4px;line-height:12.4px;color:#333;">5/3/2017 12:33:00 PM</div>
<div class="t " style="left:362.80px;top:444.66px;font-size:12.4px;line-height:12.4px;color:#333;">2017-05-03</div>
<div class="t " style="left:450.50px;top:444.66px;font-size:12.4px;line-height:12.4px;color:#333;">B505</div>
<div class="" style="left:78.40px;top:458.94px;width:455.10px;height:16.68px;background:#fde2c8;"></div>
<div class="" style="left:30.00px;top:458.94px;width:48.40px;height:16.68px;background:#d6d3ce;border:1px solid;border-color:#fff #2a2a2a #424142 #7b797b;"></div>
<div class="" style="left:78.40px;top:474.62px;width:455.10px;height:1.00px;background:rgba(150,150,160,.32);"></div>
<div class="t " style="left:33.50px;top:461.39px;font-size:12.35px;line-height:12.35px;color:#333;">24341</div>
<div class="t " style="left:81.90px;top:461.39px;font-size:12.35px;line-height:12.35px;color:#000;font-weight:bold;">WS0923.05.17</div>
<div class="t " style="left:186.50px;top:461.34px;font-size:12.4px;line-height:12.4px;color:#333;">5/2/2017 4:52:00 PM</div>
<div class="t " style="left:362.80px;top:461.34px;font-size:12.4px;line-height:12.4px;color:#333;">2017-05-05</div>
<div class="t " style="left:450.50px;top:461.34px;font-size:12.4px;line-height:12.4px;color:#333;">B504</div>
<div class="" style="left:78.40px;top:475.62px;width:455.10px;height:16.68px;background:#fde2c8;"></div>
<div class="" style="left:30.00px;top:475.62px;width:48.40px;height:16.68px;background:#d6d3ce;border:1px solid;border-color:#fff #2a2a2a #424142 #7b797b;"></div>
<div class="" style="left:78.40px;top:491.30px;width:455.10px;height:1.00px;background:rgba(150,150,160,.32);"></div>
<div class="t " style="left:33.50px;top:478.07px;font-size:12.35px;line-height:12.35px;color:#333;">24312</div>
<div class="t " style="left:81.90px;top:478.07px;font-size:12.35px;line-height:12.35px;color:#333;">WS0893.05.17</div>
<div class="t " style="left:186.50px;top:478.02px;font-size:12.4px;line-height:12.4px;color:#333;">5/1/2017 4:27:00 PM</div>
<div class="t " style="left:362.80px;top:478.02px;font-size:12.4px;line-height:12.4px;color:#333;">2017-05-22</div>
<div class="t " style="left:450.50px;top:478.02px;font-size:12.4px;line-height:12.4px;color:#333;">B504</div>
<div class="" style="left:78.40px;top:492.30px;width:455.10px;height:16.68px;background:#fde2c8;"></div>
<div class="" style="left:30.00px;top:492.30px;width:48.40px;height:16.68px;background:#d6d3ce;border:1px solid;border-color:#fff #2a2a2a #424142 #7b797b;"></div>
<div class="" style="left:78.40px;top:507.98px;width:455.10px;height:1.00px;background:rgba(150,150,160,.32);"></div>
<div class="t " style="left:33.50px;top:494.75px;font-size:12.35px;line-height:12.35px;color:#333;">24296</div>
<div class="t " style="left:81.90px;top:494.75px;font-size:12.35px;line-height:12.35px;color:#000;font-weight:bold;">WS0877.04.17</div>
<div class="t " style="left:186.50px;top:494.70px;font-size:12.4px;line-height:12.4px;color:#333;">4/26/2017 2:32:00 PM</div>
<div class="t " style="left:362.80px;top:494.70px;font-size:12.4px;line-height:12.4px;color:#333;">2017-04-28</div>
<div class="t " style="left:450.50px;top:494.70px;font-size:12.4px;line-height:12.4px;color:#333;">B501</div>
<div class="" style="left:78.40px;top:508.98px;width:455.10px;height:16.68px;background:#fde2c8;"></div>
<div class="" style="left:30.00px;top:508.98px;width:48.40px;height:16.68px;background:#d6d3ce;border:1px solid;border-color:#fff #2a2a2a #424142 #7b797b;"></div>
<div class="" style="left:78.40px;top:524.66px;width:455.10px;height:1.00px;background:rgba(150,150,160,.32);"></div>
<div class="t " style="left:33.50px;top:511.43px;font-size:12.35px;line-height:12.35px;color:#333;">24288</div>
<div class="t " style="left:81.90px;top:511.43px;font-size:12.35px;line-height:12.35px;color:#000;font-weight:bold;">WS0869.04.17</div>
<div class="t " style="left:186.50px;top:511.38px;font-size:12.4px;line-height:12.4px;color:#333;">4/24/2017 5:59:00 PM</div>
<div class="t " style="left:362.80px;top:511.38px;font-size:12.4px;line-height:12.4px;color:#333;">2017-04-27</div>
<div class="t " style="left:450.50px;top:511.38px;font-size:12.4px;line-height:12.4px;color:#333;">201704-L0048</div>
<div class="" style="left:78.40px;top:525.66px;width:455.10px;height:16.68px;background:#fde2c8;"></div>
<div class="" style="left:30.00px;top:525.66px;width:48.40px;height:16.68px;background:#d6d3ce;border:1px solid;border-color:#fff #2a2a2a #424142 #7b797b;"></div>
<div class="" style="left:78.40px;top:541.34px;width:455.10px;height:1.00px;background:rgba(150,150,160,.32);"></div>
<div class="t " style="left:33.50px;top:528.11px;font-size:12.35px;line-height:12.35px;color:#333;">24270</div>
<div class="t " style="left:81.90px;top:528.11px;font-size:12.35px;line-height:12.35px;color:#000;font-weight:bold;">WS0852.04.17</div>
<div class="t " style="left:186.50px;top:528.06px;font-size:12.4px;line-height:12.4px;color:#333;">4/21/2017 5:26:00 PM</div>
<div class="t " style="left:362.80px;top:528.06px;font-size:12.4px;line-height:12.4px;color:#333;">2017-04-30</div>
<div class="t " style="left:450.50px;top:528.06px;font-size:12.4px;line-height:12.4px;color:#333;">B501</div>
<div class="" style="left:78.40px;top:542.34px;width:455.10px;height:16.68px;background:#fde2c8;"></div>
<div class="" style="left:30.00px;top:542.34px;width:48.40px;height:16.68px;background:#d6d3ce;border:1px solid;border-color:#fff #2a2a2a #424142 #7b797b;"></div>
<div class="" style="left:78.40px;top:558.02px;width:455.10px;height:1.00px;background:rgba(150,150,160,.32);"></div>
<div class="t " style="left:33.50px;top:544.79px;font-size:12.35px;line-height:12.35px;color:#333;">24041</div>
<div class="t " style="left:81.90px;top:544.79px;font-size:12.35px;line-height:12.35px;color:#000;font-weight:bold;">WS0620.03.17</div>
<div class="t " style="left:186.50px;top:544.74px;font-size:12.4px;line-height:12.4px;color:#333;">3/26/2017 11:28:00 AM</div>
<div class="t " style="left:362.80px;top:544.74px;font-size:12.4px;line-height:12.4px;color:#333;">2017-04-07</div>
<div class="t " style="left:450.50px;top:544.74px;font-size:12.4px;line-height:12.4px;color:#333;">B502</div>
<div class="" style="left:78.40px;top:559.02px;width:455.10px;height:16.68px;background:#fde2c8;"></div>
<div class="" style="left:30.00px;top:559.02px;width:48.40px;height:16.68px;background:#d6d3ce;border:1px solid;border-color:#fff #2a2a2a #424142 #7b797b;"></div>
<div class="" style="left:78.40px;top:574.70px;width:455.10px;height:1.00px;background:rgba(150,150,160,.32);"></div>
<div class="t " style="left:33.50px;top:561.47px;font-size:12.35px;line-height:12.35px;color:#333;">23889</div>
<div class="t " style="left:81.90px;top:561.47px;font-size:12.35px;line-height:12.35px;color:#000;font-weight:bold;">WS0468.03.17</div>
<div class="t " style="left:186.50px;top:561.42px;font-size:12.4px;line-height:12.4px;color:#333;">3/9/2017 4:55:00 PM</div>
<div class="t " style="left:362.80px;top:561.42px;font-size:12.4px;line-height:12.4px;color:#333;">2017-03-23</div>
<div class="t " style="left:450.50px;top:561.42px;font-size:12.4px;line-height:12.4px;color:#333;">B501</div>
<div class="" style="left:78.40px;top:575.70px;width:455.10px;height:16.68px;background:#fde2c8;"></div>
<div class="" style="left:30.00px;top:575.70px;width:48.40px;height:16.68px;background:#d6d3ce;border:1px solid;border-color:#fff #2a2a2a #424142 #7b797b;"></div>
<div class="" style="left:78.40px;top:591.38px;width:455.10px;height:1.00px;background:rgba(150,150,160,.32);"></div>
<div class="t " style="left:33.50px;top:578.15px;font-size:12.35px;line-height:12.35px;color:#333;">23868</div>
<div class="t " style="left:81.90px;top:578.15px;font-size:12.35px;line-height:12.35px;color:#000;font-weight:bold;">WS0447.03.17</div>
<div class="t " style="left:186.50px;top:578.10px;font-size:12.4px;line-height:12.4px;color:#333;">3/4/2017 3:55:00 PM</div>
<div class="t " style="left:362.80px;top:578.10px;font-size:12.4px;line-height:12.4px;color:#333;">2017-03-18</div>
<div class="t " style="left:450.50px;top:578.10px;font-size:12.4px;line-height:12.4px;color:#333;">B501</div>
<div class="" style="left:182.50px;top:158.00px;width:1.00px;height:434.38px;background:rgba(150,150,160,.32);"></div>
<div class="" style="left:358.80px;top:158.00px;width:1.00px;height:434.38px;background:rgba(150,150,160,.32);"></div>
<div class="" style="left:446.50px;top:158.00px;width:1.00px;height:434.38px;background:rgba(150,150,160,.32);"></div>
<div class="" style="left:77.40px;top:158.00px;width:1.00px;height:434.38px;background:#424142;"></div>
<div class="" style="left:30.00px;top:591.88px;width:504.00px;height:1.00px;background:#424142;"></div>
<div class="hatch" style="left:30.00px;top:663.00px;width:504.50px;height:14.00px;"></div>
<div class="rais" style="left:30.00px;top:663.00px;width:13.50px;height:14.00px;background:#d6d3ce;"><svg width="4" height="7" viewBox="0 0 4 7" style="position:absolute;left:3.500px;top:2.500px"><path d="M4 0v7L0 3.500z" fill="#000"/></svg></div>
<div class="rais" style="left:44.00px;top:663.00px;width:14.00px;height:14.00px;background:#d6d3ce;"></div>
<div class="rais" style="left:521.00px;top:663.00px;width:13.50px;height:14.00px;background:#d6d3ce;"><svg width="4" height="7" viewBox="0 0 4 7" style="position:absolute;left:4.500px;top:2.500px"><path d="M0 0v7l4-3.500z" fill="#000"/></svg></div>
<div class="" style="left:28.50px;top:681.60px;width:175.50px;height:13.00px;border:1px solid;border-color:#848284 #fff #fff #848284;"></div>
<div class="t " style="left:32.00px;top:684.61px;font-size:7.9px;line-height:7.9px;color:#222;word-spacing:1px;">Found 26 Work Orders</div>
<div class="gf" style="left:548.00px;top:87.00px;width:843.00px;height:632.00px;"></div>
<div class="" style="left:554.00px;top:78.00px;width:134.50px;height:18.00px;background:#d6d3ce;"></div>
<div class="t " style="left:556.50px;top:78.74px;font-size:16.85px;line-height:16.85px;color:#000080;font-weight:bold;">BMS WO Editor:</div>
<div class="" style="left:553.00px;top:97.50px;width:522.50px;height:21.00px;border:1px solid;border-color:#fff #848284 #848284 #fff;"></div>
<div class="" style="left:557.00px;top:100.00px;width:1.00px;height:16.00px;background:#fff;"></div>
<div class="" style="left:558.00px;top:100.00px;width:1.00px;height:16.00px;background:#848284;"></div>
<div class="" style="left:620.60px;top:100.50px;width:1.00px;height:15.50px;background:#848284;"></div>
<div class="" style="left:621.60px;top:100.50px;width:1.00px;height:15.50px;background:#fff;"></div>
<div class="" style="left:686.00px;top:100.50px;width:1.00px;height:15.50px;background:#848284;"></div>
<div class="" style="left:687.00px;top:100.50px;width:1.00px;height:15.50px;background:#fff;"></div>
<div class="" style="left:751.00px;top:100.50px;width:1.00px;height:15.50px;background:#848284;"></div>
<div class="" style="left:752.00px;top:100.50px;width:1.00px;height:15.50px;background:#fff;"></div>
<div class="" style="left:816.00px;top:100.50px;width:1.00px;height:15.50px;background:#848284;"></div>
<div class="" style="left:817.00px;top:100.50px;width:1.00px;height:15.50px;background:#fff;"></div>
<div class="" style="left:880.80px;top:100.50px;width:1.00px;height:15.50px;background:#848284;"></div>
<div class="" style="left:881.80px;top:100.50px;width:1.00px;height:15.50px;background:#fff;"></div>
<div class="" style="left:946.00px;top:100.50px;width:1.00px;height:15.50px;background:#848284;"></div>
<div class="" style="left:947.00px;top:100.50px;width:1.00px;height:15.50px;background:#fff;"></div>
<div class="" style="left:1011.00px;top:100.50px;width:1.00px;height:15.50px;background:#848284;"></div>
<div class="" style="left:1012.00px;top:100.50px;width:1.00px;height:15.50px;background:#fff;"></div>
<div class="t " style="left:583.00px;top:104.12px;font-size:8.95px;line-height:8.95px;color:#111;">Refresh</div>
<div class="t " style="left:664.40px;top:104.12px;font-size:8.95px;line-height:8.95px;color:#111;">Add</div>
<div class="t " style="left:715.00px;top:104.12px;font-size:8.95px;line-height:8.95px;color:#8c8a88;text-shadow:1px 1px 0 #fff;">Update</div>
<div class="t " style="left:784.00px;top:104.12px;font-size:8.95px;line-height:8.95px;color:#8c8a88;text-shadow:1px 1px 0 #fff;">Delete</div>
<div class="t " style="left:845.00px;top:104.12px;font-size:8.95px;line-height:8.95px;color:#8c8a88;text-shadow:1px 1px 0 #fff;">Comply</div>
<div class="t " style="left:907.00px;top:104.12px;font-size:8.95px;line-height:8.95px;color:#8c8a88;text-shadow:1px 1px 0 #fff;">Set BMS</div>
<div class="t " style="left:993.60px;top:104.12px;font-size:8.95px;line-height:8.95px;color:#111;">PO</div>
<svg style="position:absolute;left:566px;top:102px" width="14" height="13" viewBox="0 0 14 13"><path d="M3 3.500h5.500a3 3 0 0 1 0 6h-2.500" fill="none" stroke="#18a028" stroke-width="2.200"/><path d="M1 3.500l4-3v6z" fill="#18a028"/><path d="M7.500 12l-3-2.500 3-2.500z" fill="#18a028"/></svg>
<svg style="position:absolute;left:631px;top:101px" width="14" height="14" viewBox="0 0 14 14"><path d="M4 3h4l2.500 2.500v6.500h-6.500z" fill="#30e0e8" stroke="#000" stroke-width="1"/><path d="M1.500 2v1.500M1.500 6v2M1.500 10.500v2M12.500 2v1.500M12.500 10.500v2M7 .800v1" stroke="#000" stroke-width="1"/></svg>
<svg style="position:absolute;left:696px;top:101px" width="15" height="14" viewBox="0 0 15 14"><rect x="1" y="1" width="5" height="5" fill="#8c8a88"/><path d="M7 3.500h3.500v4.500M8.500 6l2 2.500 2-2.500M5 11.500h8v-2h-8z" fill="none" stroke="#8c8a88" stroke-width="1.200"/></svg>
<svg style="position:absolute;left:760px;top:100.500px" width="15" height="15" viewBox="0 0 15 15"><rect x="0" y="0" width="14" height="14.500" fill="#8c8a88"/><rect x="3.500" y="5" width="1.500" height="9" fill="#e8e8e8"/><rect x="3.500" y="2.500" width="1.500" height="1.500" fill="#e8e8e8"/></svg>
<svg style="position:absolute;left:824px;top:101px" width="15" height="14" viewBox="0 0 15 14"><path d="M1.500 8.500l3.500 3.500 7.500-11" fill="none" stroke="#8c8a88" stroke-width="2.200"/></svg>
<svg style="position:absolute;left:889px;top:102px" width="15" height="12" viewBox="0 0 15 12"><rect x="3.500" y="1" width="10" height="10" fill="none" stroke="#8c8a88" stroke-width="1.200"/><path d="M0 6h7M5 3.500l2.500 2.500-2.500 2.500M9.500 3.500h2.500M9.500 6h2.500M9.500 8.500h2.500" stroke="#8c8a88" stroke-width="1.200" fill="none"/></svg>
<svg style="position:absolute;left:954px;top:100px" width="16" height="16" viewBox="0 0 16 16"><path d="M1.500 2v8" stroke="#804020" stroke-width="1.200"/><path d="M2 4c3-2.500 6-1.500 8 0s4 2 5 1.500v4c-2 1-4 0-6-1.500s-5-2-7 0z" fill="#e8b850" stroke="#a06820" stroke-width=".8"/><path d="M3 8.500c3-2 5-1 7 .5s3.500 1.500 4.500 1v3.500c-2 .8-3.500 0-5.500-1.500s-4-1.500-6 0z" fill="#c8d860" stroke="#708020" stroke-width=".8"/></svg>
<div class="t " style="left:1120.00px;top:93.57px;font-size:13.5px;line-height:13.5px;color:#333;">Group:</div>
<div class="t " style="left:1166.50px;top:95.34px;font-size:12px;line-height:12px;color:#e00000;">*</div>
<div class="sunk" style="left:1077.50px;top:108.80px;width:140.30px;height:22.00px;background:#fff;"></div>
<div class="rais" style="left:1201.80px;top:110.80px;width:14.00px;height:18.00px;background:#d6d3ce;"><svg width="7" height="4" viewBox="0 0 7 4" style="position:absolute;left:50%;top:50%;margin:-1.5px 0 0 -3.5px"><path d="M0 0h7L3.5 4z" fill="#000"/></svg></div>
<div class="t " style="left:1079.50px;top:112.46px;font-size:14.1px;line-height:14.1px;color:#0000a8;font-weight:bold;">BASE</div>
<div class="flat" style="left:1222.00px;top:103.30px;width:156.00px;height:30.70px;background:#fff;"></div>
<div class="t " style="left:1222.00px;top:106.69px;font-size:20.1px;line-height:20.1px;color:#0000a8;font-weight:bold;width:156.00px;text-align:center;">WS0004.08.22</div>
<div class="t " style="left:581.00px;top:138.57px;font-size:13.5px;line-height:13.5px;color:#333;">WO Date:</div>
<div class="t " style="left:661.50px;top:139.34px;font-size:12px;line-height:12px;color:#e00000;">*</div>
<div class="flat" style="left:562.00px;top:153.00px;width:113.60px;height:25.40px;background:#fff;"></div>
<div class="flat" style="left:674.60px;top:153.00px;width:71.80px;height:25.40px;background:#fff;"></div>
<div class="" style="left:674.60px;top:129.00px;width:43.40px;height:25.00px;background:#c6c3ff;border:1px solid;border-color:#e8e8ff #5a5a6a #5a5a6a #e8e8ff;box-shadow:inset -1px -1px 0 #8c8ca8;"></div>
<svg style="position:absolute;left:688.500px;top:134.500px" width="15" height="13" viewBox="0 0 15 13"><rect x="0" y="0" width="15" height="13" fill="#fff" stroke="#000" stroke-width="1"/><rect x=".5" y=".5" width="14" height="3" fill="#2030b0"/><path d="M0 4.500h15M0 7.300h15M0 10.100h15M3.500 4v9M7.500 4v9M11.500 4v9" stroke="#803030" stroke-width="1"/></svg>
<div class="t " style="left:562.00px;top:156.40px;font-size:13.7px;line-height:13.7px;color:#0000a8;font-weight:bold;width:113.60px;text-align:center;">13.08.22</div>
<div class="t " style="left:674.60px;top:156.40px;font-size:13.7px;line-height:13.7px;color:#0000a8;font-weight:bold;width:71.80px;text-align:center;">05:28</div>
<div class="t " style="left:896.60px;top:138.57px;font-size:13.5px;line-height:13.5px;color:#333;">Customer:</div>
<div class="t " style="left:970.00px;top:139.34px;font-size:12px;line-height:12px;color:#e00000;">*</div>
<div class="sunk" style="left:752.00px;top:153.50px;width:365.00px;height:22.20px;background:#fff;"></div>
<div class="rais" style="left:1101.00px;top:155.50px;width:14.00px;height:18.20px;background:#d6d3ce;"><svg width="7" height="4" viewBox="0 0 7 4" style="position:absolute;left:50%;top:50%;margin:-1.5px 0 0 -3.5px"><path d="M0 0h7L3.5 4z" fill="#000"/></svg></div>
<div class="t " style="left:754.00px;top:157.26px;font-size:14.1px;line-height:14.1px;color:#0000a8;font-weight:bold;">Flug OU</div>
<div class="t " style="left:1167.00px;top:138.37px;font-size:13.5px;line-height:13.5px;color:#333;">Customer Order Reference:</div>
<div class="t " style="left:1363.50px;top:139.34px;font-size:12px;line-height:12px;color:#e00000;">*</div>
<div class="flat" style="left:1124.00px;top:153.40px;width:254.00px;height:24.30px;background:#fff;"></div>
<div class="t " style="left:1124.00px;top:156.40px;font-size:13.7px;line-height:13.7px;color:#0000a8;font-weight:bold;width:254.00px;text-align:center;">FL5356/05-1</div>
<div class="flat" style="left:752.00px;top:178.40px;width:153.00px;height:20.00px;background:#fff;"></div>
<div class="t " style="left:656.40px;top:183.17px;font-size:13.5px;line-height:13.5px;color:#333;">PN:</div>
<div class="t " style="left:702.50px;top:184.34px;font-size:12px;line-height:12px;color:#e00000;">*</div>
<div class="t " style="left:912.00px;top:183.17px;font-size:13.5px;line-height:13.5px;color:#333;">SN:</div>
<div class="t " style="left:955.50px;top:184.34px;font-size:12px;line-height:12px;color:#e00000;">*</div>
<div class="t " style="left:1080.00px;top:183.27px;font-size:13.5px;line-height:13.5px;color:#333;">A/C Type:</div>
<div class="sunk" style="left:562.30px;top:198.50px;width:225.00px;height:21.80px;background:#fff;"></div>
<div class="rais" style="left:771.30px;top:200.50px;width:14.00px;height:17.80px;background:#d6d3ce;"><svg width="7" height="4" viewBox="0 0 7 4" style="position:absolute;left:50%;top:50%;margin:-1.5px 0 0 -3.5px"><path d="M0 0h7L3.5 4z" fill="#000"/></svg></div>
<div class="t " style="left:564.30px;top:202.06px;font-size:14.1px;line-height:14.1px;color:#0000a8;font-weight:bold;">90000582</div>
<div class="flat" style="left:796.40px;top:198.90px;width:253.60px;height:23.60px;background:#fff;"></div>
<div class="t " style="left:796.40px;top:201.40px;font-size:13.7px;line-height:13.7px;color:#0000a8;font-weight:bold;width:253.60px;text-align:center;">84</div>
<div class="sunk" style="left:1053.80px;top:197.60px;width:126.00px;height:22.20px;background:#fff;"></div>
<div class="rais" style="left:1163.80px;top:199.60px;width:14.00px;height:18.20px;background:#d6d3ce;"><svg width="7" height="4" viewBox="0 0 7 4" style="position:absolute;left:50%;top:50%;margin:-1.5px 0 0 -3.5px"><path d="M0 0h7L3.5 4z" fill="#000"/></svg></div>
<div class="t " style="left:1055.80px;top:201.36px;font-size:14.1px;line-height:14.1px;color:#0000a8;font-weight:bold;">ERJ 170</div>
<div class="t " style="left:736.70px;top:225.57px;font-size:13.5px;line-height:13.5px;color:#333;">Description:</div>
<div class="t " style="left:843.50px;top:227.34px;font-size:12px;line-height:12px;color:#e00000;">*</div>
<div class="t " style="left:1037.00px;top:226.57px;font-size:13.5px;line-height:13.5px;color:#333;">Contract Type:</div>
<div class="t " style="left:1152.00px;top:227.84px;font-size:12px;line-height:12px;color:#e00000;">*</div>
<div class="t " style="left:1195.00px;top:226.57px;font-size:13.5px;line-height:13.5px;color:#333;">A/C Reg:</div>
<div class="t " style="left:1264.20px;top:227.84px;font-size:12px;line-height:12px;color:#e00000;">*</div>
<div class="t " style="left:1295.00px;top:226.57px;font-size:13.5px;line-height:13.5px;color:#333;">Treatment:</div>
<div class="t " style="left:1373.00px;top:227.84px;font-size:12px;line-height:12px;color:#e00000;">*</div>
<div class="flat" style="left:562.30px;top:241.00px;width:422.70px;height:25.70px;background:#fff;"></div>
<div class="t " style="left:563.80px;top:244.69px;font-size:13.95px;line-height:13.95px;color:#0000a8;font-weight:bold;">ERJ MAIN WHEEL ASSY</div>
<div class="sunk" style="left:990.00px;top:241.30px;width:183.00px;height:22.20px;background:#fff;"></div>
<div class="rais" style="left:1157.00px;top:243.30px;width:14.00px;height:18.20px;background:#d6d3ce;"><svg width="7" height="4" viewBox="0 0 7 4" style="position:absolute;left:50%;top:50%;margin:-1.5px 0 0 -3.5px"><path d="M0 0h7L3.5 4z" fill="#000"/></svg></div>
<div class="t " style="left:992.00px;top:245.06px;font-size:14.1px;line-height:14.1px;color:#0000a8;font-weight:bold;">NA</div>
<div class="sunk" style="left:1180.00px;top:241.30px;width:99.50px;height:22.20px;background:#fff;"></div>
<div class="rais" style="left:1263.50px;top:243.30px;width:14.00px;height:18.20px;background:#d6d3ce;"><svg width="7" height="4" viewBox="0 0 7 4" style="position:absolute;left:50%;top:50%;margin:-1.5px 0 0 -3.5px"><path d="M0 0h7L3.5 4z" fill="#000"/></svg></div>
<div class="t " style="left:1182.00px;top:245.06px;font-size:14.1px;line-height:14.1px;color:#0000a8;font-weight:bold;">VP-BWW</div>
<div class="sunk" style="left:1292.00px;top:241.30px;width:85.60px;height:22.20px;background:#fff;"></div>
<div class="rais" style="left:1361.60px;top:243.30px;width:14.00px;height:18.20px;background:#d6d3ce;"><svg width="7" height="4" viewBox="0 0 7 4" style="position:absolute;left:50%;top:50%;margin:-1.5px 0 0 -3.5px"><path d="M0 0h7L3.5 4z" fill="#000"/></svg></div>
<div class="t " style="left:1294.00px;top:245.06px;font-size:14.1px;line-height:14.1px;color:#0000a8;font-weight:bold;">REP</div>
<div class="gf" style="left:563.00px;top:285.00px;width:323.00px;height:75.00px;"></div>
<div class="" style="left:568.00px;top:278.00px;width:41.00px;height:14.00px;background:#d6d3ce;"></div>
<div class="t " style="left:570.00px;top:277.85px;font-size:14px;line-height:14px;color:#111;font-weight:bold;">Time:</div>
<div class="t " style="left:585.00px;top:299.17px;font-size:13.5px;line-height:13.5px;color:#333;word-spacing:-1px;">TSO :</div>
<div class="t " style="left:739.00px;top:299.17px;font-size:13.5px;line-height:13.5px;color:#333;word-spacing:-1px;">TSN :</div>
<div class="t " style="left:585.00px;top:330.57px;font-size:13.5px;line-height:13.5px;color:#333;word-spacing:-1px;">CSO :</div>
<div class="t " style="left:739.00px;top:330.57px;font-size:13.5px;line-height:13.5px;color:#333;word-spacing:-1px;">CSN :</div>
<div class="flat" style="left:632.40px;top:298.00px;width:85.80px;height:25.00px;background:#fff;"></div>
<div class="t " style="left:632.40px;top:301.00px;font-size:13.7px;line-height:13.7px;color:#0000a8;font-weight:bold;width:85.80px;text-align:center;">NA</div>
<div class="flat" style="left:632.40px;top:329.40px;width:85.80px;height:25.00px;background:#fff;"></div>
<div class="t " style="left:632.40px;top:332.40px;font-size:13.7px;line-height:13.7px;color:#0000a8;font-weight:bold;width:85.80px;text-align:center;">NA</div>
<div class="flat" style="left:787.00px;top:298.00px;width:85.80px;height:25.00px;background:#fff;"></div>
<div class="t " style="left:787.00px;top:301.00px;font-size:13.7px;line-height:13.7px;color:#0000a8;font-weight:bold;width:85.80px;text-align:center;">NA</div>
<div class="flat" style="left:787.00px;top:329.40px;width:85.80px;height:25.00px;background:#fff;"></div>
<div class="t " style="left:787.00px;top:332.40px;font-size:13.7px;line-height:13.7px;color:#0000a8;font-weight:bold;width:85.80px;text-align:center;">NA</div>
<div class="gf" style="left:885.00px;top:285.00px;width:492.40px;height:75.50px;"></div>
<div class="" style="left:891.00px;top:278.00px;width:145.00px;height:14.00px;background:#d6d3ce;"></div>
<div class="t " style="left:893.30px;top:277.85px;font-size:14px;line-height:14px;color:#111;font-weight:bold;">Reason for Removal:</div>
<div class="" style="left:1080.00px;top:280.00px;width:10.00px;height:10.00px;background:#d6d3ce;"></div>
<div class="t " style="left:1082.30px;top:279.84px;font-size:12px;line-height:12px;color:#e00000;">*</div>
<div style="left:899.40px;top:298.00px;width:451.00px;height:58.00px;background:#fff;border:1px solid #3a3a3a;"></div>
<div class="t " style="left:900.90px;top:300.88px;font-size:13.85px;line-height:13.85px;color:#0000a8;font-weight:bold;">Wheel tire is worn.</div>
<div class="hatch" style="left:1350.40px;top:298.00px;width:14.20px;height:58.00px;"></div>
<div class="rais" style="left:1350.40px;top:298.00px;width:14.20px;height:13.00px;background:#d6d3ce;"><svg width="7" height="4" viewBox="0 0 7 4" style="position:absolute;left:50%;top:50%;margin:-2.5px 0 0 -3.5px"><path d="M0 4h7L3.5 0z" fill="#848284"/></svg></div>
<div class="rais" style="left:1350.40px;top:343.00px;width:14.20px;height:13.00px;background:#d6d3ce;"><svg width="7" height="4" viewBox="0 0 7 4" style="position:absolute;left:50%;top:50%;margin:-1.5px 0 0 -3.5px"><path d="M0 0h7L3.5 4z" fill="#848284"/></svg></div>
<div class="gf" style="left:563.00px;top:371.00px;width:687.60px;height:75.00px;"></div>
<div class="" style="left:568.00px;top:364.00px;width:60.00px;height:14.00px;background:#d6d3ce;"></div>
<div class="t " style="left:571.50px;top:363.85px;font-size:14px;line-height:14px;color:#111;font-weight:bold;">Request:</div>
<div style="left:575.50px;top:383.40px;width:649.00px;height:58.20px;background:#fff;border:1px solid #3a3a3a;"></div>
<div class="t " style="left:578.50px;top:386.40px;font-size:13.7px;line-height:13.7px;color:#0000a8;font-weight:bold;">Tire replacement.</div>
<div class="hatch" style="left:1224.50px;top:383.40px;width:14.00px;height:58.20px;"></div>
<div class="rais" style="left:1224.50px;top:383.40px;width:14.00px;height:13.00px;background:#d6d3ce;"><svg width="7" height="4" viewBox="0 0 7 4" style="position:absolute;left:50%;top:50%;margin:-2.5px 0 0 -3.5px"><path d="M0 4h7L3.5 0z" fill="#848284"/></svg></div>
<div class="rais" style="left:1224.50px;top:428.60px;width:14.00px;height:13.00px;background:#d6d3ce;"><svg width="7" height="4" viewBox="0 0 7 4" style="position:absolute;left:50%;top:50%;margin:-1.5px 0 0 -3.5px"><path d="M0 0h7L3.5 4z" fill="#848284"/></svg></div>
<div class="cb" style="left:1264.40px;top:369.50px;width:11.4px;height:11.4px;background:#fff;"><svg viewBox="0 0 9 9" style="position:absolute;left:0.5px;top:0.5px;width:8.4px;height:8.4px"><path d="M1 3.2v3l2.4 2.4L8.2 3.8V.8L3.4 5.6z" fill="#000"/></svg></div>
<div class="t " style="left:1281.30px;top:369.05px;font-size:12.35px;line-height:12.35px;color:#222;">Received</div>
<div class="cb" style="left:1264.40px;top:387.10px;width:11.4px;height:11.4px;background:#fff;"><svg viewBox="0 0 9 9" style="position:absolute;left:0.5px;top:0.5px;width:8.4px;height:8.4px"><path d="M1 3.2v3l2.4 2.4L8.2 3.8V.8L3.4 5.6z" fill="#000"/></svg></div>
<div class="t " style="left:1281.30px;top:386.65px;font-size:12.35px;line-height:12.35px;color:#222;">Disassembly</div>
<div class="cb" style="left:1264.40px;top:404.70px;width:11.4px;height:11.4px;background:#fff;"><svg viewBox="0 0 9 9" style="position:absolute;left:0.5px;top:0.5px;width:8.4px;height:8.4px"><path d="M1 3.2v3l2.4 2.4L8.2 3.8V.8L3.4 5.6z" fill="#000"/></svg></div>
<div class="t " style="left:1281.30px;top:404.25px;font-size:12.35px;line-height:12.35px;color:#222;">Cleaning</div>
<div class="cb" style="left:1264.40px;top:422.30px;width:11.4px;height:11.4px;background:#fff;"></div>
<div class="t " style="left:1281.30px;top:421.85px;font-size:12.35px;line-height:12.35px;color:#222;">Paint Removal</div>
<div class="cb" style="left:1264.40px;top:439.90px;width:11.4px;height:11.4px;background:#fff;"><svg viewBox="0 0 9 9" style="position:absolute;left:0.5px;top:0.5px;width:8.4px;height:8.4px"><path d="M1 3.2v3l2.4 2.4L8.2 3.8V.8L3.4 5.6z" fill="#000"/></svg></div>
<div class="t " style="left:1281.30px;top:439.45px;font-size:12.35px;line-height:12.35px;color:#222;">Inspection</div>
<div class="cb" style="left:1264.40px;top:457.50px;width:11.4px;height:11.4px;background:#fff;"><svg viewBox="0 0 9 9" style="position:absolute;left:0.5px;top:0.5px;width:8.4px;height:8.4px"><path d="M1 3.2v3l2.4 2.4L8.2 3.8V.8L3.4 5.6z" fill="#000"/></svg></div>
<div class="t " style="left:1281.30px;top:457.05px;font-size:12.35px;line-height:12.35px;color:#222;">NDT</div>
<div class="cb" style="left:1264.40px;top:475.10px;width:11.4px;height:11.4px;background:#fff;"><svg viewBox="0 0 9 9" style="position:absolute;left:0.5px;top:0.5px;width:8.4px;height:8.4px"><path d="M1 3.2v3l2.4 2.4L8.2 3.8V.8L3.4 5.6z" fill="#000"/></svg></div>
<div class="t " style="left:1281.30px;top:474.65px;font-size:12.35px;line-height:12.35px;color:#222;">Repair</div>
<div class="cb" style="left:1264.40px;top:492.70px;width:11.4px;height:11.4px;background:#fff;"></div>
<div class="t " style="left:1281.30px;top:492.25px;font-size:12.35px;line-height:12.35px;color:#222;">Painting</div>
<div class="cb" style="left:1264.40px;top:510.30px;width:11.4px;height:11.4px;background:#fff;"><svg viewBox="0 0 9 9" style="position:absolute;left:0.5px;top:0.5px;width:8.4px;height:8.4px"><path d="M1 3.2v3l2.4 2.4L8.2 3.8V.8L3.4 5.6z" fill="#000"/></svg></div>
<div class="t " style="left:1281.30px;top:509.85px;font-size:12.35px;line-height:12.35px;color:#222;">Assembly</div>
<div class="t " style="left:569.50px;top:445.65px;font-size:14px;line-height:14px;color:#111;font-weight:bold;">Notes:</div>
<div style="left:562.30px;top:459.40px;width:676.20px;height:47.00px;background:#fff;border:1px solid #3a3a3a;"></div>
<div class="hatch" style="left:1238.50px;top:459.40px;width:14.00px;height:47.00px;"></div>
<div class="rais" style="left:1238.50px;top:459.40px;width:14.00px;height:13.00px;background:#d6d3ce;"><svg width="7" height="4" viewBox="0 0 7 4" style="position:absolute;left:50%;top:50%;margin:-2.5px 0 0 -3.5px"><path d="M0 4h7L3.5 0z" fill="#848284"/></svg></div>
<div class="rais" style="left:1238.50px;top:493.40px;width:14.00px;height:13.00px;background:#d6d3ce;"><svg width="7" height="4" viewBox="0 0 7 4" style="position:absolute;left:50%;top:50%;margin:-1.5px 0 0 -3.5px"><path d="M0 0h7L3.5 4z" fill="#848284"/></svg></div>
<div class="cb" style="left:563.00px;top:516.50px;width:10.5px;height:10.5px;background:#fff;"><svg viewBox="0 0 9 9" style="position:absolute;left:0.5px;top:0.5px;width:7.5px;height:7.5px"><path d="M1 3.2v3l2.4 2.4L8.2 3.8V.8L3.4 5.6z" fill="#000"/></svg></div>
<div class="t " style="left:578.70px;top:514.11px;font-size:14.05px;line-height:14.05px;color:#111;font-weight:bold;">Strip Down</div>
<div class="cb" style="left:689.00px;top:516.50px;width:10.5px;height:10.5px;background:#fff;"></div>
<div class="t " style="left:705.00px;top:514.11px;font-size:14.05px;line-height:14.05px;color:#800000;font-weight:bold;">On Hold</div>
<div class="cb" style="left:563.00px;top:542.50px;width:10.5px;height:10.5px;background:#fff;"></div>
<div class="t " style="left:581.00px;top:537.76px;font-size:18px;line-height:18px;color:#800000;font-weight:bold;">AOG</div>
<div class="cb" style="left:642.30px;top:542.50px;width:10.5px;height:10.5px;background:#fff;"></div>
<div class="t " style="left:658.00px;top:540.06px;font-size:14.1px;line-height:14.1px;color:#600000;font-weight:bold;">Urgent</div>
<div class="cb" style="left:726.00px;top:542.50px;width:10.5px;height:10.5px;background:#fff;"><svg viewBox="0 0 9 9" style="position:absolute;left:0.5px;top:0.5px;width:7.5px;height:7.5px"><path d="M1 3.2v3l2.4 2.4L8.2 3.8V.8L3.4 5.6z" fill="#000"/></svg></div>
<div class="t " style="left:742.60px;top:540.11px;font-size:14.05px;line-height:14.05px;color:#111;font-weight:bold;">Routine</div>
<div class="t " style="left:819.30px;top:515.57px;font-size:13.5px;line-height:13.5px;color:#333;">DeadLine:</div>
<div class="t " style="left:895.20px;top:516.34px;font-size:12px;line-height:12px;color:#e00000;">*</div>
<div class="flat" style="left:822.00px;top:530.00px;width:128.60px;height:24.60px;background:#fff;"></div>
<div class="" style="left:912.60px;top:507.70px;width:38.00px;height:24.30px;background:#c6c3ff;border:1px solid;border-color:#e8e8ff #5a5a6a #5a5a6a #e8e8ff;box-shadow:inset -1px -1px 0 #8c8ca8;"></div>
<svg style="position:absolute;left:924px;top:513px" width="15" height="13" viewBox="0 0 15 13"><rect x="0" y="0" width="15" height="13" fill="#fff" stroke="#000" stroke-width="1"/><rect x=".5" y=".5" width="14" height="3" fill="#2030b0"/><path d="M0 4.500h15M0 7.300h15M0 10.100h15M3.500 4v9M7.500 4v9M11.500 4v9" stroke="#803030" stroke-width="1"/></svg>
<div class="t " style="left:822.00px;top:532.90px;font-size:13.7px;line-height:13.7px;color:#0000a8;font-weight:bold;width:127.80px;text-align:center;">22.08.24</div>
<div class="t " style="left:955.70px;top:515.37px;font-size:13.5px;line-height:13.5px;color:#333;">Originator:</div>
<div class="t " style="left:1037.50px;top:515.34px;font-size:12px;line-height:12px;color:#e00000;">*</div>
<div class="t " style="left:1189.00px;top:515.37px;font-size:13.5px;line-height:13.5px;color:#333;">Name:</div>
<div class="sunk" style="left:952.50px;top:530.40px;width:70.50px;height:21.00px;background:#fff;"></div>
<div class="rais" style="left:1007.00px;top:532.40px;width:14.00px;height:17.00px;background:#d6d3ce;"><svg width="7" height="4" viewBox="0 0 7 4" style="position:absolute;left:50%;top:50%;margin:-1.5px 0 0 -3.5px"><path d="M0 0h7L3.5 4z" fill="#000"/></svg></div>
<div class="t " style="left:954.50px;top:533.56px;font-size:14.1px;line-height:14.1px;color:#0000a8;font-weight:bold;">DEM</div>
<div class="flat" style="left:1025.40px;top:529.40px;width:353.00px;height:25.00px;background:#e7e3e7;"></div>
<div class="t " style="left:1025.40px;top:533.20px;font-size:13.7px;line-height:13.7px;color:#111;font-weight:bold;width:353.00px;text-align:center;">DEMO USER</div>
<div class="" style="left:546.00px;top:561.50px;width:831.00px;height:160.00px;background:#d6d3ce;"></div>
<div class="gf" style="left:548.00px;top:568.50px;width:394.00px;height:150.50px;"></div>
<div class="gf" style="left:941.00px;top:568.50px;width:436.00px;height:150.50px;"></div>
<div class="" style="left:553.00px;top:561.00px;width:226.00px;height:14.00px;background:#d6d3ce;"></div>
<div class="t " style="left:555.80px;top:562.30px;font-size:11.7px;line-height:11.7px;color:#000058;font-weight:bold;letter-spacing:0.585px;">Spare Parts Required for Treatment:</div>
<div class="" style="left:947.00px;top:561.00px;width:161.00px;height:14.00px;background:#d6d3ce;"></div>
<div class="t " style="left:949.30px;top:562.30px;font-size:11.7px;line-height:11.7px;color:#000058;font-weight:bold;letter-spacing:0.622px;">CMM Manual Information:</div>
<div class="" style="left:562.80px;top:583.00px;width:364.70px;height:123.60px;background:#848284;border:1px solid;border-color:#848284 #fff #fff #848284;box-shadow:inset 1px 1px 0 #424142;"></div>
<div class="rais" style="left:563.80px;top:584.00px;width:235.50px;height:17.50px;background:#d6d3ce;"></div>
<div class="t " style="left:567.80px;top:586.89px;font-size:12.3px;line-height:12.3px;color:#333;">No Selection !</div>
<div class="" style="left:957.00px;top:583.00px;width:405.40px;height:123.60px;background:#848284;border:1px solid;border-color:#848284 #fff #fff #848284;box-shadow:inset 1px 1px 0 #424142;"></div>
<div class="rais" style="left:958.00px;top:584.00px;width:235.00px;height:17.50px;background:#d6d3ce;"></div>
<div class="t " style="left:962.00px;top:586.89px;font-size:12.3px;line-height:12.3px;color:#333;">No Selection !</div>
<div class="" style="left:1401.80px;top:0.00px;width:1.20px;height:751.00px;background:#eef1f6;"></div>
<div class="" style="left:597.80px;top:333.40px;width:217.00px;height:125.50px;background:#d6d3ce;border:1px solid;border-color:#d6d3ce #424142 #424142 #d6d3ce;box-shadow:inset 1px 1px 0 #fff, inset -1px -1px 0 #848284;"></div>
<div class="" style="left:599.70px;top:334.70px;width:212.60px;height:15.10px;background:#0a246a;"></div>
<div class="t " style="left:601.40px;top:338.15px;font-size:9.75px;line-height:9.75px;color:#fff;font-weight:bold;">Add New WO</div>
<div class="rais" style="left:796.00px;top:336.60px;width:14.00px;height:11.20px;background:#d6d3ce;"><svg width="12" height="9" viewBox="0 0 12 9" style="position:absolute;left:0;top:0"><path d="M3.500 1.500l5.500 6M9 1.500l-5.500 6" stroke="#848284" stroke-width="1.300"/></svg></div>
<div class="" style="left:599.70px;top:349.80px;width:212.60px;height:69.90px;background:#fffefc;"></div>
<svg style="position:absolute;left:617.300px;top:371px" width="29" height="29" viewBox="0 0 29 29"><defs><radialGradient id="qg" cx="38%" cy="35%" r="70%"><stop offset="0" stop-color="#4a78ea"/><stop offset=".5" stop-color="#2048c0"/><stop offset="1" stop-color="#10309a"/></radialGradient></defs><circle cx="14.500" cy="14.500" r="14" fill="#a8b6cf"/><circle cx="14.500" cy="14.500" r="13.300" fill="#e8eef8"/><circle cx="14.500" cy="14.500" r="12.600" fill="url(#qg)"/><text x="14.600" y="23.300" text-anchor="middle" font-family="Liberation Sans, sans-serif" font-weight="bold" font-size="23" fill="#f4f6ff">?</text></svg>
<div class="t " style="left:653.80px;top:382.76px;font-size:9.38px;line-height:9.38px;color:#111;">Confirm Add New Work Order !</div>
<div class="rais" style="left:665.00px;top:428.50px;width:65.80px;height:20.00px;background:#d6d3ce;"></div>
<div class="t " style="left:665.00px;top:433.64px;font-size:9.4px;line-height:9.4px;color:#111;width:65.80px;text-align:center;">Yes</div>
<div class="" style="left:737.90px;top:428.50px;width:66.00px;height:20.00px;border:1px solid #000;"></div>
<div class="rais" style="left:738.90px;top:429.50px;width:64.00px;height:18.00px;background:#d6d3ce;"></div>
<div class="t " style="left:737.90px;top:433.64px;font-size:9.4px;line-height:9.4px;color:#111;width:66.00px;text-align:center;">No</div>
<svg style="position:absolute;left:680px;top:420px" width="180" height="180" viewBox="680 420 180 180"><path d="M699.200 430L785.500 573.500L810 570L819.800 546.800z" fill="#0d99ff"/><circle cx="809.700" cy="569.900" r="23.900" fill="#141a24"/><circle cx="809.700" cy="569.900" r="22.800" fill="#fff"/><circle cx="809.700" cy="569.900" r="21.100" fill="#0d99ff"/><text x="809.900" y="577" text-anchor="middle" font-family="Liberation Sans, sans-serif" font-weight="bold" font-size="19" fill="#fff">28</text></svg>
</body></html>
